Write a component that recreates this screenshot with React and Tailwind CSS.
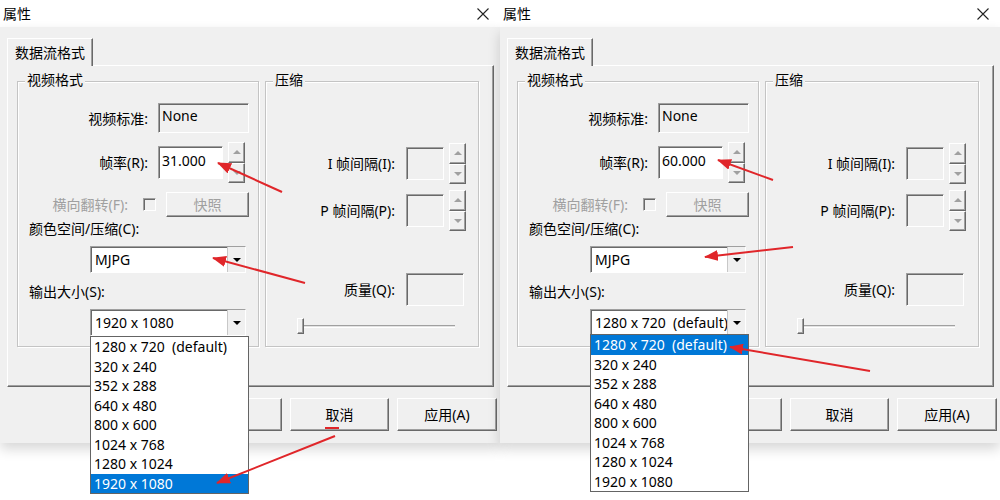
const raised =
  "bg-[#f0f0f0] border border-t-white border-l-white border-r-[#696969] border-b-[#696969] shadow-[inset_-1px_-1px_0_#a0a0a0]";
const sunken =
  "border border-t-[#a0a0a0] border-l-[#a0a0a0] border-r-white border-b-white shadow-[inset_1px_1px_0_#696969]";

const sizes = [
  "1280 x 720  (default)",
  "320 x 240",
  "352 x 288",
  "640 x 480",
  "800 x 600",
  "1024 x 768",
  "1280 x 1024",
  "1920 x 1080",
];

function Spinner() {
  return (
    <div className="flex flex-col w-[17px] h-[41px]">
      <div className={`${raised} flex-1 flex items-center justify-center`}>
        <div className="w-0 h-0 border-l-[4px] border-r-[4px] border-b-[4px] border-l-transparent border-r-transparent border-b-[#a0a0a0]" />
      </div>
      <div className={`${raised} flex-1 flex items-center justify-center`}>
        <div className="w-0 h-0 border-l-[4px] border-r-[4px] border-t-[4px] border-l-transparent border-r-transparent border-t-[#a0a0a0]" />
      </div>
    </div>
  );
}

function Combo({ text }) {
  return (
    <div className={`${sunken} ml-[72px] w-[156px] h-[27px] bg-white flex`}>
      <div className="flex-1 overflow-hidden whitespace-pre pl-[4px] leading-[25px]">
        {text}
      </div>
      <div className="w-[18px] border-l border-[#c8c8c8] bg-[#f0f0f0] flex items-center justify-center">
        <div className="w-0 h-0 border-l-[4px] border-r-[4px] border-t-[4px] border-l-transparent border-r-transparent border-t-black" />
      </div>
    </div>
  );
}

function GroupLabel({ children }) {
  return (
    <span className="block w-fit -mt-[12px] -mb-[8px] ml-[7px] px-[2px] h-[20px] leading-[20px] bg-[#f0f0f0]">
      {children}
    </span>
  );
}

function Dialog({ rate, comboText, selected, listTop }) {
  return (
    <div className="relative w-[500px] h-[500px] shrink-0 flex flex-col">
      <div className="h-[27px] bg-white flex items-center justify-between pl-[3px] pr-[11px]">
        <span>属性</span>
        <svg width="12" height="12" viewBox="0 0 12 12">
          <path d="M0.5 0.5 L11.5 11.5 M11.5 0.5 L0.5 11.5" stroke="#222" strokeWidth="1.1" />
        </svg>
      </div>
      <div className="h-[416px] bg-[#f0f0f0] shadow-[0_6px_12px_rgba(0,0,0,0.16)] pl-[7px] pt-[11px]">
        <div className="relative z-[1] w-[86px] h-[28px] -mb-[1px] bg-[#f0f0f0] border border-b-0 border-t-white border-l-white border-r-[#696969] flex items-center justify-center shadow-[inset_-1px_0_0_#a0a0a0]">
          数据流格式
        </div>
        <div className="w-[487px] h-[322px] border border-t-white border-l-white border-r-[#696969] border-b-[#696969] shadow-[inset_-1px_-1px_0_#a0a0a0]">
          <div className="flex mt-[15px] ml-[9px] gap-[6px]">
            <div className="w-[242px] h-[266px] border border-[#c4c4c4] shadow-[inset_1px_1px_0_#fff,1px_1px_0_#fff]">
              <GroupLabel>视频格式</GroupLabel>
              <div className="mt-[21px] h-[30px] flex items-center">
                <span className="w-[130px] text-right">视频标准:</span>
                <div className={`${sunken} ml-[10px] w-[91px] h-[30px] pl-[3px] leading-[24px]`}>None</div>
              </div>
              <div className="mt-[9px] h-[41px] flex items-center">
                <span className="w-[130px] text-right">帧率(R):</span>
                <div className={`${sunken} ml-[10px] w-[65px] h-[33px] bg-white pl-[3px] leading-[28px]`}>{rate}</div>
                <div className="ml-[5px]">
                  <Spinner />
                </div>
              </div>
              <div className="mt-[9px] h-[25px] flex items-center text-[#a0a0a0]">
                <span className="w-[110px] text-right">横向翻转(F):</span>
                <div className={`${sunken} ml-[15px] w-[13px] h-[13px]`} />
                <div className={`${raised} ml-[10px] w-[83px] h-[25px] flex items-center justify-center`}>快照</div>
              </div>
              <div className="mt-[2px] h-[20px] leading-[20px] pl-[11px]">颜色空间/压缩(C):</div>
              <div className="mt-[7px]">
                <Combo text="MJPG" />
              </div>
              <div className="mt-[9px] h-[20px] leading-[20px] pl-[11px]">输出大小(S):</div>
              <div className="mt-[7px]">
                <Combo text={comboText} />
              </div>
            </div>
            <div className="w-[214px] h-[266px] border border-[#c4c4c4] shadow-[inset_1px_1px_0_#fff,1px_1px_0_#fff]">
              <GroupLabel>压缩</GroupLabel>
              <div className="mt-[61px] h-[41px] flex items-center">
                <span className="w-[129px] text-right">I 帧间隔(I):</span>
                <div className={`${sunken} ml-[11px] w-[38px] h-[33px]`} />
                <div className="ml-[5px]">
                  <Spinner />
                </div>
              </div>
              <div className="mt-[6px] h-[41px] flex items-center">
                <span className="w-[129px] text-right">P 帧间隔(P):</span>
                <div className={`${sunken} ml-[11px] w-[38px] h-[33px]`} />
                <div className="ml-[5px]">
                  <Spinner />
                </div>
              </div>
              <div className="mt-[42px] h-[33px] flex items-center">
                <span className="w-[129px] text-right">质量(Q):</span>
                <div className={`${sunken} ml-[11px] w-[58px] h-[33px]`} />
              </div>
              <div className="relative mt-[12px] ml-[31px] w-[158px] h-[16px] flex items-center">
                <div className="w-full h-[3px] border-t border-b border-t-[#a0a0a0] border-b-white bg-[#e3e3e3]" />
                <div className={`${raised} absolute left-0 top-0 w-[7px] h-[16px]`} />
              </div>
            </div>
          </div>
        </div>
        <div className="flex justify-end gap-[8px] pr-[3px] mt-[11px]">
          <div className={`${raised} w-[99px] h-[33px] flex items-center justify-center`}>确定</div>
          <div className={`${raised} w-[99px] h-[33px] flex items-center justify-center`}>取消</div>
          <div className={`${raised} w-[100px] h-[33px] flex items-center justify-center`}>应用(A)</div>
        </div>
      </div>
      <div className={`absolute left-[90px] ${listTop} z-10 w-[159px] border border-[#646464] bg-white`}>
        {sizes.map((s, i) => (
          <div
            key={s}
            className={`h-[19.5px] leading-[19.5px] pl-[3px] whitespace-pre ${
              i === selected ? "bg-[#0078d7] text-white" : ""
            }`}
          >
            {s}
          </div>
        ))}
      </div>
    </div>
  );
}

function Arrows() {
  const lines = [
    [282, 192, 218, 163],
    [305, 283, 213, 258],
    [335, 436, 217, 483],
    [773, 180, 718, 160],
    [793, 247, 705, 257],
    [870, 371, 730, 347],
  ];
  return (
    <svg className="absolute inset-0 z-20 pointer-events-none" width="1000" height="500">
      <defs>
        <marker id="head" markerUnits="userSpaceOnUse" markerWidth="14" markerHeight="11" refX="13" refY="5.5" orient="auto">
          <path d="M0 0 L14 5.5 L0 11 Z" fill="#e0262a" />
        </marker>
      </defs>
      {lines.map(([x1, y1, x2, y2], i) => (
        <line key={i} x1={x1} y1={y1} x2={x2} y2={y2} stroke="#e0262a" strokeWidth="2" markerEnd="url(#head)" />
      ))}
      <line x1="325" y1="428" x2="339" y2="428" stroke="#e0262a" strokeWidth="2" />
    </svg>
  );
}

export default function App() {
  return (
    <div className="relative w-[1000px] h-[500px] overflow-hidden bg-white flex text-[14px] text-black font-['Noto_Sans','Noto_Sans_CJK_SC',sans-serif]">
      <Dialog rate="31.000" comboText="1920 x 1080" selected={7} listTop="top-[336px]" />
      <Dialog rate="60.000" comboText="1280 x 720  (default)" selected={0} listTop="top-[334px]" />
      <Arrows />
    </div>
  );
}
